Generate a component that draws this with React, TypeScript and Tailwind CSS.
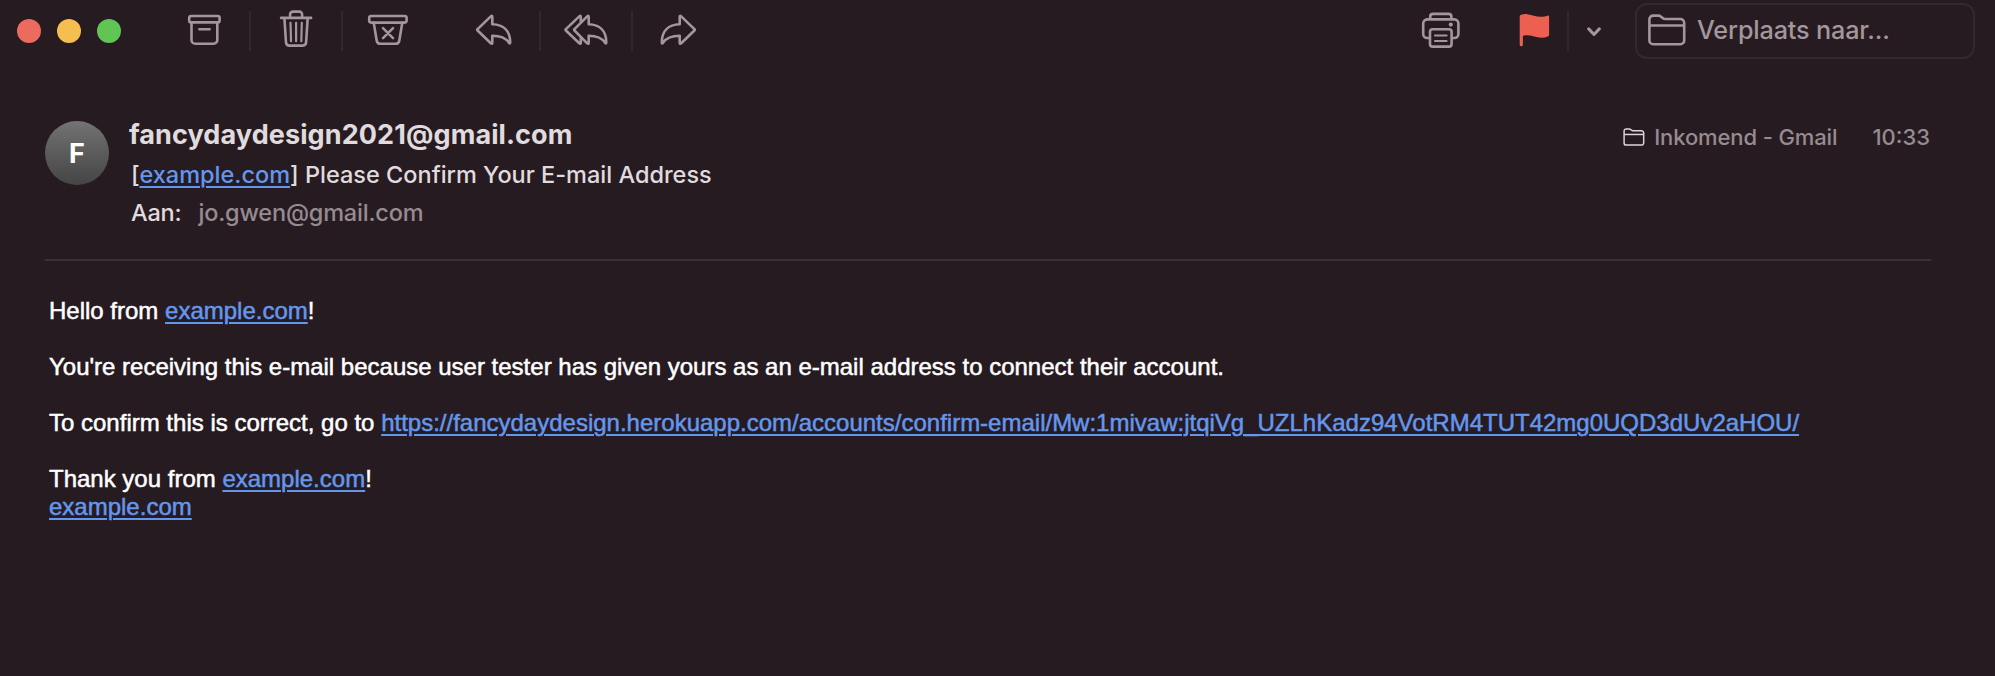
import type { ReactNode } from "react";

function Icon({ children }: { children: ReactNode }) {
  return (
    <svg
      width="48"
      height="48"
      viewBox="0 0 48 48"
      fill="none"
      stroke="currentColor"
      strokeWidth="2.6"
      strokeLinecap="round"
      strokeLinejoin="round"
      className="shrink-0"
    >
      {children}
    </svg>
  );
}

function ToolButton({ label, children }: { label: string; children: ReactNode }) {
  return (
    <button aria-label={label} className="flex h-[62px] w-[90px] shrink-0 items-center justify-center">
      <Icon>{children}</Icon>
    </button>
  );
}

function Separator() {
  return <span className="h-10 w-0.5 shrink-0 bg-[#32272d]" />;
}

const replyPath =
  "M7.6 22.1 20.8 9.4q1.5-1.2 1.5.6V17.3C33.5 17.6 40.2 24 40.2 35.4q-.1 2-1.2.3C35.7 30.8 30.5 28.7 22.3 28.7V35.7q0 1.8-1.5.6L7.6 23.5q-.8-.7 0-1.4Z";

function FolderIcon({ className }: { className: string }) {
  return (
    <svg viewBox="0 0 38 32" fill="none" stroke="currentColor" strokeWidth="2.6" strokeLinejoin="round" className={className}>
      <path d="M1.4 26.5V5.4a3.8 3.8 0 0 1 3.8-3.8h5.500c2.5 0 3.500 3.400 6.200 3.400h15.500a3.800 3.800 0 0 1 3.800 3.800v17.700a3.800 3.800 0 0 1-3.800 3.800H5.200a3.800 3.800 0 0 1-3.800-3.800Z" />
      <path d="M1.400 11.500h34.800" />
    </svg>
  );
}

function Link({ children }: { children: ReactNode }) {
  return (
    <a href="#" className="text-[#6497ec] underline decoration-2 underline-offset-[2.5px]">
      {children}
    </a>
  );
}

export default function App() {
  return (
    <div className="h-[676px] w-[1995px] overflow-hidden bg-[#261b21] font-['Inter',sans-serif]">
      <header className="flex h-[62px] items-center pl-[17px] pr-5 text-[#a3979d]">
        <div className="flex gap-4">
          <span className="size-6 rounded-full bg-[#ed6a5f]" />
          <span className="size-6 rounded-full bg-[#f5bf4f]" />
          <span className="size-6 rounded-full bg-[#61c555]" />
        </div>
        <div className="ml-[38px] flex items-center">
          <ToolButton label="Archiveer">
            <rect x="9.2" y="9" width="30.4" height="6.4" rx="2" />
            <path d="M11.500 15.400V33a3.800 3.800 0 0 0 3.800 3.800h18.200a3.800 3.800 0 0 0 3.800-3.800V15.400M19.400 22.200h10.200" />
          </ToolButton>
          <Separator />
          <ToolButton label="Verwijder">
            <path d="M9.100 10.900h30M18.100 10.900V7.400a2.800 2.800 0 0 1 2.800-2.800h6.400a2.800 2.800 0 0 1 2.800 2.800v3.500M12.400 10.900l1.600 24.500a3.500 3.500 0 0 0 3.500 3.200h13.100a3.500 3.500 0 0 0 3.500-3.200l1.600-24.500" />
            <path strokeWidth="2.2" d="M18.500 15.800l.5 18.400M24.100 15.800v18.400M29.800 15.800l-.5 18.400" />
          </ToolButton>
          <Separator />
          <ToolButton label="Ongewenst">
            <rect x="5.200" y="9" width="37.400" height="6.600" rx="2" />
            <path d="M9.700 15.600l3 17.900a3.800 3.800 0 0 0 3.800 3.300h15a3.800 3.800 0 0 0 3.800-3.300l3-17.900M19 21.200l10 10M29 21.200l-10 10" />
          </ToolButton>
        </div>
        <div className="ml-4 flex items-center">
          <ToolButton label="Beantwoord">
            <path d={replyPath} />
          </ToolButton>
          <Separator />
          <ToolButton label="Beantwoord allen">
            <path d="M12.500 22.100 25.200 9.400q1.500-1.200 1.500.6V17.300C37.600 17.600 44.300 24 44.300 35.400q-.1 2-1.200.3C39.800 30.800 34.600 28.700 26.700 28.700V35.700q0 1.800-1.500.6L12.500 23.500q-.8-.7 0-1.400Z" />
            <path d="M18.800 14.500V10q0-1.800-1.500-.6L3.900 22.100q-.8.700 0 1.400L17.300 36.300q1.500 1.200 1.500-.6V31" />
          </ToolButton>
          <Separator />
          <ToolButton label="Stuur door">
            <path transform="translate(48 0) scale(-1 1)" d={replyPath} />
          </ToolButton>
        </div>
        <div className="ml-auto flex items-center">
          <button aria-label="Druk af" className="mr-[47px]">
            <Icon>
              <path d="M12.400 31H10.200a4 4 0 0 1-4-4V16.400a4 4 0 0 1 4-4h27.200a4 4 0 0 1 4 4V27a4 4 0 0 1-4 4h-2.200M13.200 12.400V9.700a2.800 2.800 0 0 1 2.800-2.800h15.600a2.800 2.800 0 0 1 2.800 2.800v2.700" />
              <rect x="13" y="22.200" width="21.600" height="17.400" rx="2.600" />
              <path strokeWidth="2.1" d="M18 28.500h11.600M18 34h11.600" />
              <circle cx="33.800" cy="17.600" r="2.100" fill="currentColor" stroke="none" />
            </Icon>
          </button>
          <button aria-label="Markeer" className="mr-[7px] text-[#ec5f51]">
            <Icon>
              <path
                fill="currentColor"
                stroke="none"
                d="M7.700 9.300q0-1 1-1.400C10.500 7.200 13 6.900 15.500 7.200c5 .6 8 2.600 13 2.600 3 0 5-.5 7-1.100 1.200-.3 1.600.2 1.600 1.200v17.900q0 1.200-1.200 1.700C32.500 30.900 28.500 31 24.500 30c-5-1.300-8.500-2.700-13.600-1.200v8.900q0 1.500-1.600 1.500T7.700 37.700Z"
              />
            </Icon>
          </button>
          <Separator />
          <svg width="14" height="10" viewBox="0 0 14 10" fill="none" stroke="currentColor" strokeWidth="3" strokeLinecap="round" strokeLinejoin="round" className="ml-[18px] mr-[34px] mt-0.5">
            <path d="M1.700 1.900 7 7.500l5.300-5.600" />
          </svg>
          <div className="flex h-14 w-[340px] items-center rounded-xl border-2 border-[#33282e] pl-[11px]">
            <FolderIcon className="-mt-0.5 h-8 w-[38px]" />
            <span className="ml-[11px] whitespace-nowrap text-[25.200px] font-[450] tracking-[-0.15px]">Verplaats naar...</span>
          </div>
        </div>
      </header>

      <main className="pl-[45px] pr-16 pt-[59px]">
        <section className="flex h-[138px]">
          <div className="flex size-16 shrink-0 items-center justify-center rounded-full bg-linear-to-b from-[#737373] to-[#454545] pt-0.5 text-[27px] font-bold text-white">
            F
          </div>
          <div className="ml-5 flex flex-col whitespace-nowrap text-[#e0dbde]">
            <h1 className="h-9 text-[27px] font-bold leading-[28px] tracking-[0.1px]">fancydaydesign2021@gmail.com</h1>
            <p className="ml-0.5 h-[38px] text-[23.500px] font-medium leading-[36px]">
              [<Link>example.com</Link>] Please Confirm Your E-mail Address
            </p>
            <p className="ml-0.5 text-[23.500px] font-medium leading-[36px] tracking-[-0.200px]">
              Aan:<span className="ml-[17px] font-[450] text-[#968b90]">jo.gwen@gmail.com</span>
            </p>
          </div>
          <div className="ml-auto mr-px flex h-8 items-center whitespace-nowrap text-[22px] font-[450] tracking-[-0.120px] text-[#968b90]">
            <FolderIcon className="h-[18px] w-[22px] text-[#dcd7da]" />
            <span className="ml-[9px]">Inkomend - Gmail</span>
            <time className="ml-[35px] tracking-normal">10:33</time>
          </div>
        </section>
        <hr className="border-t-2 border-[#3b3036]" />
        <article className="ml-1 mt-9 flex flex-col gap-7 whitespace-nowrap font-['Liberation_Sans',sans-serif] text-[24px] leading-[28px] text-white [-webkit-text-stroke:0.5px_currentColor]">
          <p>
            Hello from <Link>example.com</Link>!
          </p>
          <p>You're receiving this e-mail because user tester has given yours as an e-mail address to connect their account.</p>
          <p>
            To confirm this is correct, go to{" "}
            <Link>https://fancydaydesign.herokuapp.com/accounts/confirm-email/Mw:1mivaw:jtqiVg_UZLhKadz94VotRM4TUT42mg0UQD3dUv2aHOU/</Link>
          </p>
          <p>
            Thank you from <Link>example.com</Link>!
            <br />
            <Link>example.com</Link>
          </p>
        </article>
      </main>
    </div>
  );
}
